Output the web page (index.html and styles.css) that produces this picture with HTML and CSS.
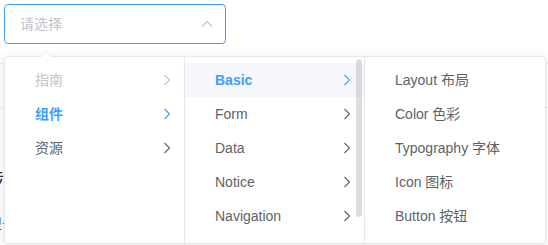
FILE: index.html
```html
<!DOCTYPE html>
<html lang="zh-CN">
<head>
  <meta charset="UTF-8" />
  <title>Cascader</title>
  <link rel="stylesheet" href="styles.css">
</head>
<body>
  <div class="page">
    <div class="cascader">
      <div class="cascader-input is-focus">
        <span class="placeholder">请选择</span>
        <svg class="suffix" width="14" height="14" viewBox="0 0 14 14">
          <polyline points="2,9.5 7,4.5 12,9.5" fill="none" stroke="#c0c4cc" stroke-width="1.2" />
        </svg>
      </div>
    </div>

    <!-- page content behind the dropdown -->
    <div class="doc">
      <div class="doc-rule top"></div>
      <div class="doc-rule"></div>
      <p class="doc-title">涉及</p>
      <p class="doc-text">型号</p>
    </div>

    <div class="popper">
      <div class="menu">
        <ul class="menu-list">
          <li class="node is-disabled"><span class="label">指南</span><svg class="arrow" viewBox="0 0 14 14"><polyline points="4.5,2 9.5,7 4.5,12" /></svg></li>
          <li class="node is-active"><span class="label">组件</span><svg class="arrow" viewBox="0 0 14 14"><polyline points="4.5,2 9.5,7 4.5,12" /></svg></li>
          <li class="node"><span class="label">资源</span><svg class="arrow" viewBox="0 0 14 14"><polyline points="4.5,2 9.5,7 4.5,12" /></svg></li>
        </ul>
      </div>
      <div class="menu">
        <ul class="menu-list">
          <li class="node is-active is-hover"><span class="label">Basic</span><svg class="arrow" viewBox="0 0 14 14"><polyline points="4.5,2 9.5,7 4.5,12" /></svg></li>
          <li class="node"><span class="label">Form</span><svg class="arrow" viewBox="0 0 14 14"><polyline points="4.5,2 9.5,7 4.5,12" /></svg></li>
          <li class="node"><span class="label">Data</span><svg class="arrow" viewBox="0 0 14 14"><polyline points="4.5,2 9.5,7 4.5,12" /></svg></li>
          <li class="node"><span class="label">Notice</span><svg class="arrow" viewBox="0 0 14 14"><polyline points="4.5,2 9.5,7 4.5,12" /></svg></li>
          <li class="node"><span class="label">Navigation</span><svg class="arrow" viewBox="0 0 14 14"><polyline points="4.5,2 9.5,7 4.5,12" /></svg></li>
          <li class="node"><span class="label">Others</span><svg class="arrow" viewBox="0 0 14 14"><polyline points="4.5,2 9.5,7 4.5,12" /></svg></li>
        </ul>
        <div class="scroll-thumb"></div>
      </div>
      <div class="menu">
        <ul class="menu-list">
          <li class="node"><span class="label">Layout 布局</span></li>
          <li class="node"><span class="label">Color 色彩</span></li>
          <li class="node"><span class="label">Typography 字体</span></li>
          <li class="node"><span class="label">Icon 图标</span></li>
          <li class="node"><span class="label">Button 按钮</span></li>
        </ul>
      </div>
    </div>
  </div>
</body>
</html>
```

FILE: styles.css
```css
/* Reset & base */
* {
  box-sizing: border-box;
}
body {
  margin: 0;
  font-family: "Liberation Sans", Arial, "Noto Sans CJK SC", sans-serif;
  font-size: 14px;
  color: #606266;
  background: #fff;
}
.page {
  position: relative;
  padding: 4px;
  height: 245px;
  overflow: hidden;
}

/* Input */
.cascader {
  width: 222px;
}
.cascader-input {
  display: flex;
  align-items: center;
  justify-content: space-between;
  height: 40px;
  padding: 0 11px 0 15px;
  border: 1px solid #dcdfe6;
  border-radius: 4px;
  background: #fff;
}
.cascader-input.is-focus {
  border-color: #409eff;
}
.placeholder {
  color: #c0c4cc;
  line-height: 38px;
}
.suffix {
  display: block;
}

/* Content behind the popper */
.doc {
  margin: 0 -4px;
}
.doc-rule {
  height: 1px;
  background: #ebeef5;
  margin-top: 43px;
}
.doc-rule.top {
  margin-top: 19px;
}
.doc-title {
  margin: 56px 0 0 -16px;
  font-size: 20px;
  color: #1f2f3d;
}
.doc-text {
  margin: 20px 0 0 -12px;
  color: #5e6d82;
}

/* Dropdown */
.popper {
  position: absolute;
  left: 4px;
  top: 56px;
  display: flex;
  height: 188px;
  background: #fff;
  border: 1px solid #e4e7ed;
  border-radius: 4px;
  box-shadow: 0 2px 12px 0 rgba(0, 0, 0, 0.1);
}
.popper::before,
.popper::after {
  content: "";
  position: absolute;
  left: 35px;
  border: 6px solid transparent;
  border-top-width: 0;
}
.popper::before {
  top: -6px;
  border-bottom-color: #e4e7ed;
}
.popper::after {
  top: -5px;
  border-bottom-color: #fff;
}
.menu {
  position: relative;
  width: 180px;
  overflow: hidden;
  border-right: 1px solid #e4e7ed;
}
.menu:last-child {
  border-right: none;
}
.menu-list {
  list-style: none;
  margin: 0;
  padding: 6px 0;
}
.node {
  position: relative;
  display: flex;
  align-items: center;
  height: 34px;
  padding: 0 30px 0 20px;
  line-height: 34px;
  color: #606266;
}
.node .label {
  flex: 1;
  padding: 0 10px;
  white-space: nowrap;
}
.node .arrow {
  position: absolute;
  right: 10px;
  top: 10px;
  width: 14px;
  height: 14px;
  fill: none;
  stroke: currentColor;
  stroke-width: 1.1;
}
.node.is-disabled {
  color: #c0c4cc;
}
.node.is-active {
  color: #409eff;
  font-weight: 700;
}
.node.is-hover {
  background: #f5f7fa;
}
.scroll-thumb {
  position: absolute;
  right: 2px;
  top: 2px;
  width: 6px;
  height: 158px;
  border-radius: 3px;
  background: rgba(144, 147, 153, 0.3);
}
```
